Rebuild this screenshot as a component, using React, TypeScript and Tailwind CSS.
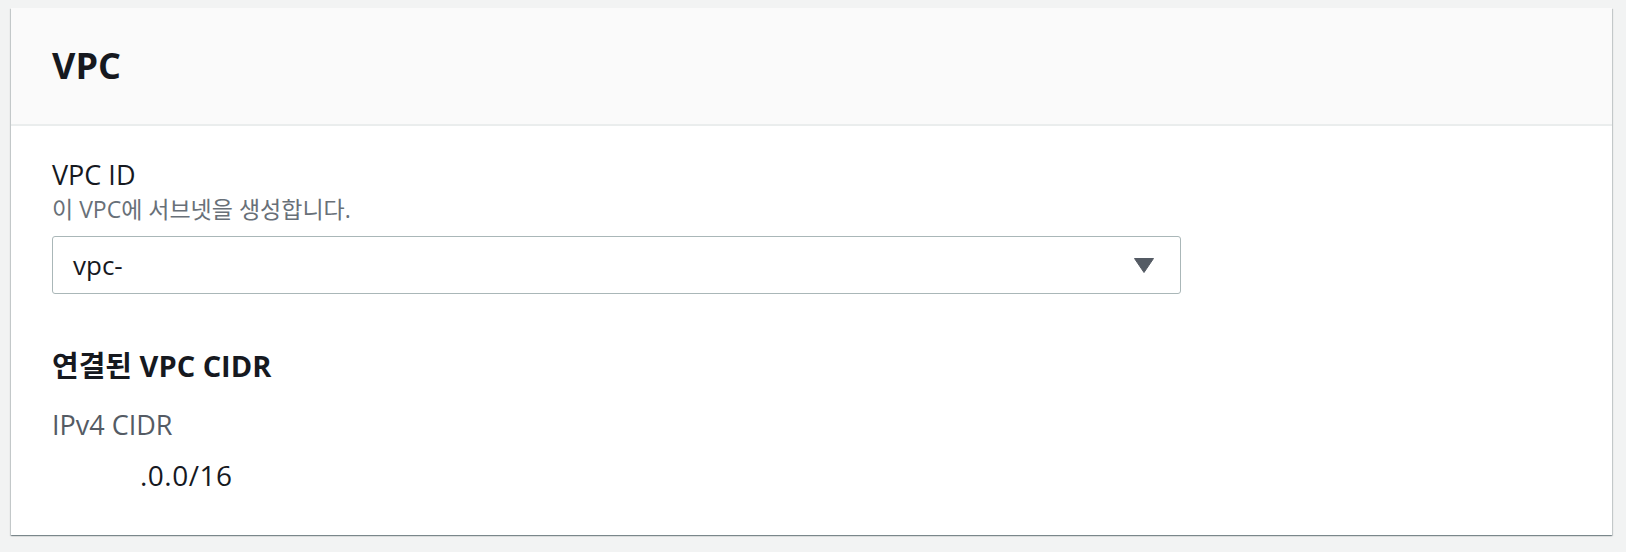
const FONT = { fontFamily: '"Open Sans", "Noto Sans CJK KR", sans-serif' }

function CaretDown() {
  return (
    <svg width="20" height="15" viewBox="0 0 20 15" className="shrink-0">
      <path d="M0.5 0.5 H19.5 L10 14.5 Z" fill="#545b64" strokeLinejoin="round" stroke="#545b64" />
    </svg>
  )
}

function Select({ value }: { value: string }) {
  return (
    <div className="mt-[13px] flex h-[58px] w-[1129px] items-center justify-between rounded-[3px] border border-[#aab7b8] bg-white pl-[20px] pr-[26px]">
      <span className="text-[26px] leading-[34px] text-[#16191f]">{value}</span>
      <CaretDown />
    </div>
  )
}

export default function App() {
  return (
    <div className="min-h-[552px] bg-[#f2f3f3] pt-[8px] pl-[11px] pr-[14px] pb-[16px]" style={FONT}>
      <div className="bg-white shadow-[0_1px_1px_0_rgba(0,28,36,0.3),1px_1px_1px_0_rgba(0,28,36,0.15),-1px_1px_1px_0_rgba(0,28,36,0.15)]">
        <div className="border-b-2 border-[#eaeded] bg-[#fafafa] pl-[41px] pt-[38px] pb-[38px]">
          <h2 className="text-[36px] font-bold leading-[40px] text-[#16191f]">VPC</h2>
        </div>

        <div className="pl-[41px] pt-[32px] pb-[43px]">
          <p className="text-[27px] leading-[34px] text-[#16191f]">VPC ID</p>
          <p className="mt-[3px] text-[23px] leading-[28px] text-[#687078]">이 VPC에 서브넷을 생성합니다.</p>
          <Select value="vpc-" />

          <h3 className="mt-[54px] text-[29px] font-bold leading-[36px] text-[#16191f]">연결된 VPC CIDR</h3>
          <p className="mt-[24px] text-[27px] leading-[34px] text-[#545b64]">IPv4 CIDR</p>
          <p className="mt-[16px] pl-[88px] text-[28px] leading-[34px] tracking-[0.5px] text-[#16191f]">.0.0/16</p>
        </div>
      </div>
    </div>
  )
}
